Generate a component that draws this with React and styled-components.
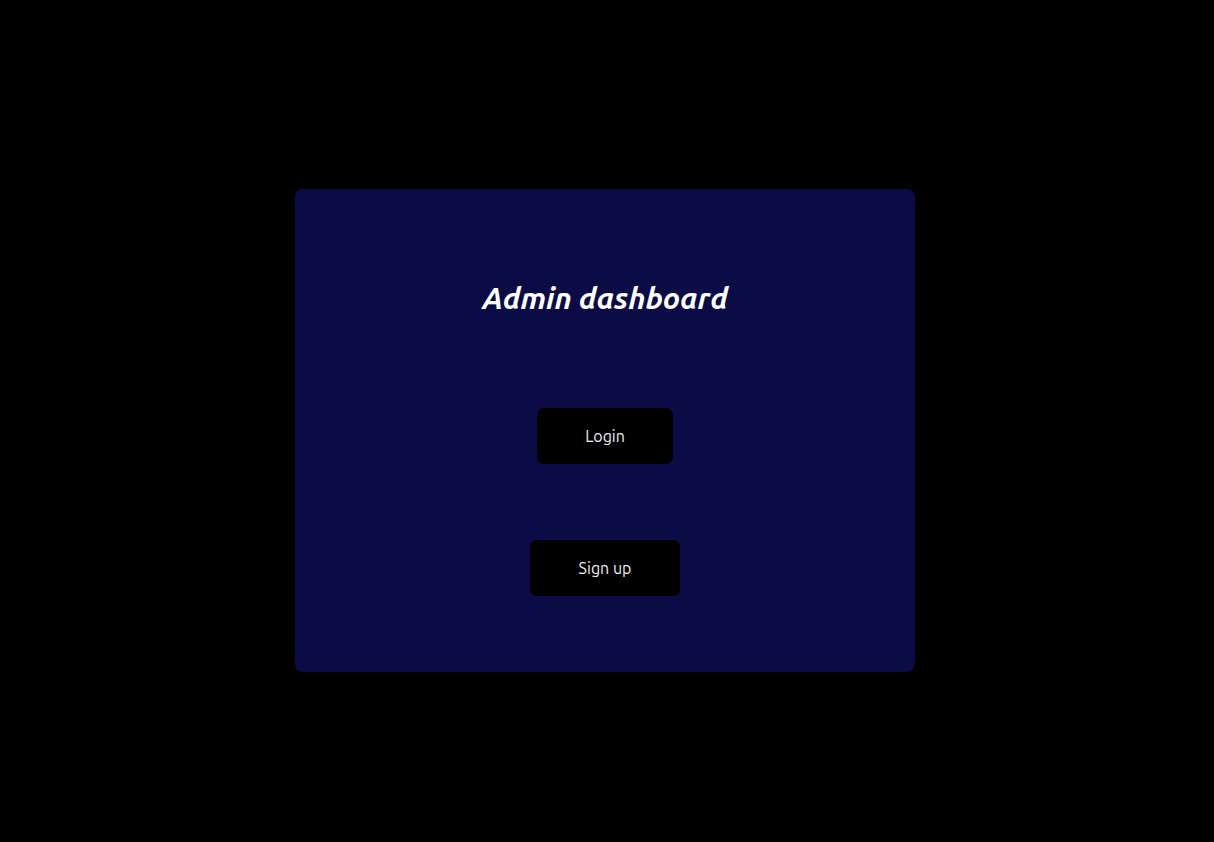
import React from 'react';
import styled, { createGlobalStyle } from 'styled-components';

const Global = createGlobalStyle`
  html, body { margin: 0; padding: 0; background: #000; }
  body { font-family: Ubuntu, "Noto Sans", "Open Sans", sans-serif; }
`;

const Page = styled.main`
  height: 842px;
  box-sizing: border-box;
  padding: 19px 4px 0 0;
  display: flex;
  align-items: center;
  justify-content: center;
`;

const Card = styled.section`
  width: 620px;
  height: 483px;
  box-sizing: border-box;
  background: #0b0b45;
  border-radius: 8px;
  padding-top: 90px;
  display: flex;
  flex-direction: column;
  align-items: center;
`;

const Title = styled.h1`
  margin: 0 0 91px;
  color: #fff;
  font-size: 30px;
  line-height: 38px;
  font-style: italic;
  font-weight: 700;
`;

const Actions = styled.div`
  display: flex;
  flex-direction: column;
  align-items: center;
  gap: 76px;
`;

const Button = styled.button`
  height: 56px;
  padding: 0 ${p => p.$px || 48}px;
  border: none;
  border-radius: 7px;
  background: #000;
  color: #eeeef2;
  font-family: inherit;
  font-size: 16px;
  cursor: pointer;
`;

export default function App() {
  return (
    <>
      <Global />
      <Page>
        <Card>
          <Title>Admin dashboard</Title>
          <Actions>
            <Button>Login</Button>
            <Button $px={49}>Sign up</Button>
          </Actions>
        </Card>
      </Page>
    </>
  );
}
